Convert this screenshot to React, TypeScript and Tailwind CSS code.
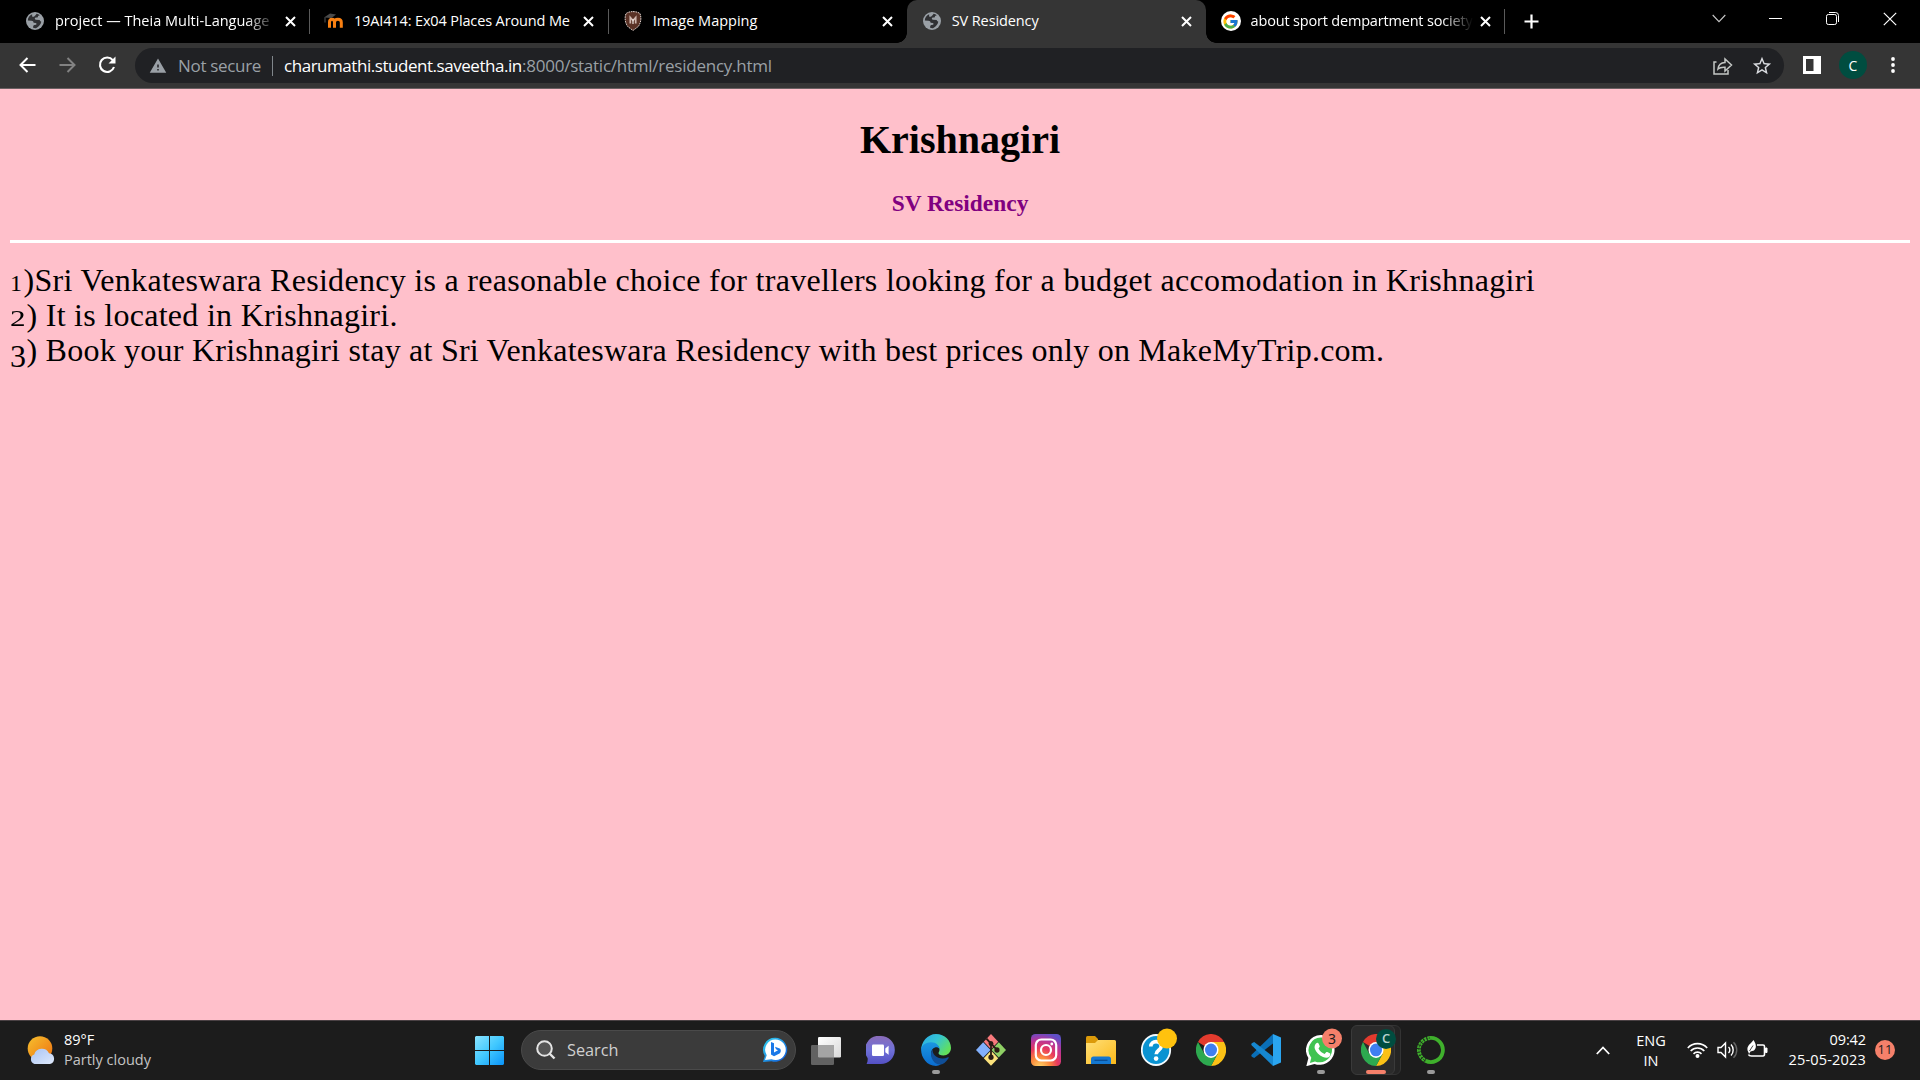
import React from "react";
import { FcGoogle } from "react-icons/fc";
import { MdStarBorder, MdWarning } from "react-icons/md";

const Globe = () => (
  <svg width="18" height="18" viewBox="0 0 18 18">
    <circle cx="9" cy="9" r="9" fill="#9aa0a6" />
    <path d="M6.2 2.2C3.6 3.2 1.8 5.800 1.800 8.600l3.600.2c1.500 0 2.100.8 2.200 2l2.200.3c.8.2.9 1 .3 1.700l-1.700.3c-.9.3-1.300 1-1.300 2.700 1.100.4 2.300.5 3.300.2 2.600-1.500 4.300-3.600 4.900-6.300-.9-.3-1.500-.9-1.700-1.700l-3.800-.2c-1.200-.2-1.400-1.800-.1-2.200l1.600-.2c.6-.2.7-.7.7-1.500l1.800-.7c-1-.8-2-1.300-3.200-1.500L9.500 3.200 8.200 4.600c-1 .6-2 .1-2.100-.7z" fill="#303134" />
  </svg>
);

const Moodle = () => (
  <svg width="20" height="16" viewBox="0 0 20 16">
    <path d="M5.500 14.800V9.300c0-4.200 5-4.200 5 0v5.500M10.500 9.300c0-4.200 6.800-4.200 6.800 0v5.500" fill="none" stroke="#f98012" strokeWidth="3" />
    <path d="M0 4.500 6 .6l6 .8L7.500 5z" fill="#4a4a4a" />
    <path d="M1 4.500v5" stroke="#555" strokeWidth="1" />
  </svg>
);

const Crest = () => (
  <svg width="18" height="20" viewBox="0 0 18 20">
    <path d="M9 .6c3 0 5.500.8 7 2 1.700 4.500.8 9.500-1.800 13L9 19.500l-5.200-3.900C1.200 12.100.3 7.100 2 2.600c1.500-1.200 4-2 7-2z" fill="#5a3226" stroke="#e0d4d0" strokeWidth="1" strokeDasharray="1.600 .8" />
    <path d="M6.300 12.500V6.500l2.700 3 2.700-3v6" fill="none" stroke="#d0b8b0" strokeWidth="1.700" />
    <path d="M9 8v5" stroke="#f0e6e2" strokeWidth="1.200" />
  </svg>
);

const GoogleIcon = () => (
  <span className="flex h-5 w-5 items-center justify-center rounded-full bg-white"><FcGoogle size={17} /></span>
);

const Cross = () => (
  <svg width="11" height="11" viewBox="0 0 11 11" className="shrink-0">
    <path d="M1 1l9 9M10 1l-9 9" stroke="#fff" strokeWidth="2" />
  </svg>
);

const tabs = [
  { icon: <Globe />, title: "project — Theia Multi-Language", cls: "tracking-normal", fade: true },
  { icon: <Moodle />, title: "19AI414: Ex04 Places Around Me", cls: "tracking-[-0.130px]", fade: false },
  { icon: <Crest />, title: "Image Mapping", cls: "tracking-normal", fade: false },
  { icon: <Globe />, title: "SV Residency", cls: "tracking-[-0.100px]", fade: false, active: true },
  { icon: <GoogleIcon />, title: "about sport dempartment society", cls: "tracking-[-0.180px]", fade: true },
];

function TabStrip() {
  return (
    <div className="flex h-[43px] bg-black pl-[10px]">
      {tabs.map((t) => (
        <div key={t.title} className={t.active ? "relative flex h-[43px] w-[298.900px] shrink-0 items-center rounded-t-[10px] bg-[#353535] pl-[15px]" : "relative flex h-[43px] w-[298.900px] shrink-0 items-center pl-[15px]"}>
          {t.active && (
            <>
              <span className="absolute bottom-0 -left-[10px] h-[10px] w-[10px] bg-[radial-gradient(circle_at_0_0,#000_9.500px,#353535_10px)]" />
              <span className="absolute -right-[10px] bottom-0 h-[10px] w-[10px] bg-[radial-gradient(circle_at_100%_0,#000_9.500px,#353535_10px)]" />
            </>
          )}
          <span className="mb-px flex w-5 justify-center">{t.icon}</span>
          <span className={t.fade ? "mb-[3px] ml-[10px] w-[222px] whitespace-nowrap [mask-image:linear-gradient(to_right,#000_86%,transparent_100%)]" : "mb-[3px] ml-[10px] w-[222px] whitespace-nowrap"}>
            <span className={"inline-block text-[14.500px] leading-5 text-white " + t.cls}>{t.title}</span>
          </span>
          <span className="absolute left-[274.500px]"><Cross /></span>
          {!t.active && t.title !== "Image Mapping" && <span className="absolute -right-px h-[25px] w-px bg-[#5a5a5a]" />}
          {t.title === "19AI414: Ex04 Places Around Me" && <span className="absolute -right-px h-[25px] w-px bg-[#5a5a5a]" />}
        </div>
      ))}
      <div className="flex flex-1 items-center pl-[20px]">
        <svg width="15" height="15" viewBox="0 0 15 15"><path d="M7.500.5v14M.5 7.500h14" stroke="#fff" strokeWidth="2.200" /></svg>
        <svg width="14" height="9" viewBox="0 0 14 9" className="mb-[6px] ml-[173px]"><path d="M.7 1l6.300 6.600L13.300 1" fill="none" stroke="#c8c8c8" strokeWidth="1.100" /></svg>
        <span className="mb-[6px] ml-[43px] h-px w-[13px] bg-white" />
        <svg width="13" height="13" viewBox="0 0 13 13" className="mb-[6px] ml-[44px]" fill="none" stroke="#fff">
          <rect x=".5" y="2.500" width="10" height="10" rx="1.800" /><path d="M3 .5h6.500a3 3 0 0 1 3 3v6.500" />
        </svg>
        <svg width="14" height="14" viewBox="0 0 14 14" className="mb-[6px] ml-[44px]"><path d="M.8.8l12.400 12.400M13.200.8.8 13.200" stroke="#fff" strokeWidth="1.200" /></svg>
      </div>
    </div>
  );
}

function Toolbar() {
  return (
    <div className="flex h-[46px] items-center border-b border-[#6a6062] bg-[#353535] pl-[19px]">
      <svg width="17" height="16" viewBox="0 0 17 16" fill="none" stroke="#fff" strokeWidth="2" className="mb-px"><path d="M16.500 8H1.800M8.500 1 1.500 8l7 7" /></svg>
      <svg width="17" height="16" viewBox="0 0 17 16" fill="none" stroke="#828282" strokeWidth="2" className="mb-px ml-[23px]"><path d="M.5 8h14.700M8.500 1l7 7-7 7" /></svg>
      <svg width="18" height="18" viewBox="0 0 18 18" fill="none" stroke="#fff" strokeWidth="2.100" className="mb-px ml-[22px]"><path d="M14.800 4.200A7.200 7.200 0 1 0 16 11" /><path d="M17.500.5v7h-7z" fill="#fff" stroke="none" /></svg>
      <div className="ml-[19px] flex h-[35px] w-[1649px] items-center rounded-full bg-[#202124] pl-[14px] text-[17px]">
        <MdWarning size={18} color="#9aa0a6" />
        <div className="ml-[11px] w-[83px] tracking-[-0.320px] whitespace-nowrap text-[#9aa0a6]">Not secure</div>
        <span className="ml-[11px] h-5 w-px bg-[#80868b]" />
        <div className="ml-[11px] w-[238px] tracking-[-0.460px] whitespace-nowrap text-white">charumathi.student.saveetha.in</div>
        <div className="tracking-[-0.240px] whitespace-nowrap text-[#9aa0a6]">:8000/static/html/residency.html</div>
        <svg width="20" height="18" viewBox="0 0 20 18" className="mr-[18px] ml-auto" fill="none" stroke="#c4c7c5" strokeWidth="1.500"><path d="M3.500 5H1v12h14v-4" /><path d="M5 12c.5-4 3-6.200 7-6.400V2l6.500 6-6.500 6v-3.800C8.800 10 6.500 10.500 5 12z" /></svg>
        <MdStarBorder size={22} color="#dadce0" className="mr-[11px]" />
      </div>
      <svg width="18" height="18" viewBox="0 0 18 18" className="mb-px ml-[19px]"><path fillRule="evenodd" d="M0 0h18v18H0zM3 3v12h7.500V3z" fill="#fff" /></svg>
      <span className="mb-px ml-[18px] flex h-7 w-7 items-center justify-center rounded-full bg-[#004d40] text-[14px] text-white">C</span>
      <svg width="4" height="16" viewBox="0 0 4 16" className="mb-px ml-[24px]" fill="#fff"><circle cx="2" cy="2" r="1.900" /><circle cx="2" cy="8" r="1.900" /><circle cx="2" cy="14" r="1.900" /></svg>
    </div>
  );
}

const Chrome = () => (
  <svg width="30" height="32" viewBox="0 0 48 51" preserveAspectRatio="none">
    <g transform="scale(1 1.060)">
      <path d="M24 24 3.200 12A24 24 0 0 1 44.800 12z" fill="#e33b2e" />
      <path d="M24 24V12h20.800A24 24 0 0 1 24 48l10.400-18z" fill="#fbc116" />
      <path d="M3.200 12A24 24 0 0 0 24 48l10.400-18L24 24l-10.400 6z" fill="#2da94f" />
      <circle cx="24" cy="24" r="12" fill="#fff" /><circle cx="24" cy="24" r="9.600" fill="#3f7ff0" />
    </g>
  </svg>
);

const Start = () => (
  <svg width="29" height="29" viewBox="0 0 29 29">
    <defs><linearGradient id="win" x1="0" y1="0" x2="1" y2="1" ><stop offset="0" stopColor="#8ae4ff" /><stop offset=".5" stopColor="#41c8ff" /><stop offset="1" stopColor="#0a93f8" /></linearGradient></defs>
    <path d="M1 0h13v14H0V1zM15 0h13l1 1v13H15zM0 15h14v14H1l-1-1zM15 15h14v13l-1 1H15z" fill="url(#win)" />
  </svg>
);

const Bing = () => (
  <svg width="26" height="26" viewBox="0 0 26 26">
    <defs><linearGradient id="bng" x1="0" y1="0" x2="1" y2="1"><stop offset="0" stopColor="#32d4f0" /><stop offset="1" stopColor="#0f54d8" /></linearGradient></defs>
    <path d="M13.500.8a12 12 0 1 1-4 23.400L1 25l1.800-6A12 12 0 0 1 13.500.8z" fill="url(#bng)" />
    <path d="M13.500 2.500a10.300 10.300 0 1 1-4 19.800L3 23l1.700-4.800A10.300 10.300 0 0 1 13.500 2.500z" fill="#fff" />
    <path d="M9 5l3 1.200v9.300l4-2.300-2-1-1-2.500 4.700 1.800c1.500.7 1.600 3.800-.2 5L12 19.300 9 17.500z" fill="#1a78e8" />
  </svg>
);

const TaskView = () => (
  <svg width="30" height="28" viewBox="0 0 30 28">
    <defs><linearGradient id="tv" x1="0" y1="0" x2="1" y2="1"><stop offset="0" stopColor="#fff" /><stop offset="1" stopColor="#d8d8d8" /></linearGradient></defs>
    <rect x="7" y="0" width="23" height="20.500" rx="1.200" fill="url(#tv)" />
    <rect x="0" y="8" width="23" height="20" rx="1.200" fill="#626262" />
    <path d="M7 8h16v12.500H8.200A1.200 1.200 0 0 1 7 19.300z" fill="#a4a4a4" />
  </svg>
);

const Chat = () => (
  <svg width="29" height="29" viewBox="0 0 29 29">
    <defs><linearGradient id="cht" x1="0" y1="0" x2="0" y2="1"><stop offset="0" stopColor="#8a6bb8" /><stop offset=".5" stopColor="#6f71d8" /><stop offset="1" stopColor="#5450c4" /></linearGradient></defs>
    <path d="M14.800 0a14 14 0 1 1 0 28H.6c1-2 1.300-4 1-6A14 14 0 0 1 14.800 0z" fill="url(#cht)" />
    <rect x="6" y="8.500" width="12" height="11.500" rx="1.200" fill="#fff" /><path d="M19.300 12.500 22.600 9.800v9l-3.300-2.500z" fill="#fff" />
  </svg>
);

const Edge = () => (
  <svg width="30" height="32" viewBox="0 0 30 32">
    <defs>
      <linearGradient id="ed1" x1="0" y1="0" x2="1" y2=".6"><stop offset="0" stopColor="#2aa8e8" /><stop offset=".5" stopColor="#34c4d4" /><stop offset="1" stopColor="#62e05a" /></linearGradient>
      <linearGradient id="ed2" x1="0" y1="0" x2="0" y2="1"><stop offset="0" stopColor="#1b96e0" /><stop offset="1" stopColor="#0a6cd0" /></linearGradient>
    </defs>
    <path d="M15 0c9 0 15 6.500 15 14 0 4.500-3.600 7.500-7.500 7.500-3.500 0-5-1.300-5-2.500 0-.8 1-1.300 1-3.300 0-3.500-3.200-6.300-8-6.300C5 9.400 1 13 .2 16 0 8 6.500 0 15 0z" fill="url(#ed1)" />
    <path d="M.1 16C0 11.500 5 8.300 10 8.300c5.500 0 8.400 3.500 8.600 6.800-1-1.500-2.600-2.100-4.600-1.700-3 .9-4.500 4-3.500 8 1.200 4.500 5 8.600 9.500 8.700-2 1.400-3.500 1.900-5 1.900C6 32 .2 23.500.1 16z" fill="url(#ed2)" />
    <path d="M11.500 15.500c-3 4-1.200 11 3.500 14 4.500 2.500 9 .5 12.700-5.500.3-.6-.2-1-.8-.7-4 2-10 1.500-13-1.700-1.600-1.800-2.400-4-2.400-6.100z" fill="#104f98" />
  </svg>
);

const Git = () => (
  <svg width="30" height="32" viewBox="0 0 30 32">
    <g transform="scale(1 1.060)">
      <path d="M15 0l7.200 7.200-7.200 7.300-7.200-7.300z" fill="#f8797c" />
      <path d="M7.200 7.800l7.300 7.200-7.300 7.200L0 15z" fill="#82b0fc" />
      <path d="M22.800 7.800 30 15l-7.200 7.200-7.300-7.200z" fill="#8fd065" />
      <path d="M15 15.500l7.200 7.300L15 30l-7.200-7.200z" fill="#fbe27c" />
      <path d="M10.500 4.500l4.500 4.500v13M15 9l6 6" stroke="#2b1b14" strokeWidth="1.800" fill="none" />
      <circle cx="15" cy="9" r="2.400" fill="#2b1b14" /><circle cx="15" cy="22" r="2.600" fill="#2b1b14" /><circle cx="21" cy="15" r="2.600" fill="#2b1b14" />
    </g>
  </svg>
);

const Insta = () => (
  <svg width="30" height="32" viewBox="0 0 30 32">
    <defs>
      <radialGradient id="ig" cx=".3" cy="1.050" r="1.100"><stop offset="0" stopColor="#ffd86a" /><stop offset=".3" stopColor="#fb8a3c" /><stop offset=".55" stopColor="#e8395e" /><stop offset=".8" stopColor="#b5359c" /><stop offset="1" stopColor="#6050c8" /></radialGradient>
    </defs>
    <rect y="0" width="30" height="32" rx="4.500" fill="url(#ig)" />
    <g fill="none" stroke="#fff" strokeWidth="2.200"><rect x="4.800" y="5.500" width="20.400" height="21" rx="5.500" /><circle cx="15" cy="16" r="5" /></g>
    <circle cx="20.800" cy="10" r="1.400" fill="#fff" />
  </svg>
);

const Folder = () => (
  <svg width="30" height="29" viewBox="0 0 30 29">
    <defs><linearGradient id="fld" x1="0" y1="0" x2="1" y2="1"><stop offset="0" stopColor="#ffdf78" /><stop offset="1" stopColor="#fbb91a" /></linearGradient></defs>
    <path d="M0 1.500Q0 0 1.500 0H9l3 3v4H0z" fill="#dc9a0a" />
    <path d="M0 7h9l3-3h16.500Q30 4 30 5.500V28H0z" fill="url(#fld)" />
    <path d="M5 28v-5q0-2.500 2.500-2.500h15Q25 20.500 25 23v5z" fill="#1477d0" /><path d="M8.500 24.300h13" stroke="#0a4d94" strokeWidth="1.300" />
  </svg>
);

const Help = () => (
  <svg width="36" height="38" viewBox="0 0 36 38">
    <ellipse cx="15" cy="22" rx="14.200" ry="15" fill="#0a93d2" stroke="#f4fafd" strokeWidth="1.800" />
    <path d="M9.800 18.500c0-6.500 10.400-6.500 10.400-.3 0 4.200-5 4-5 8" fill="none" stroke="#fff" strokeWidth="3.700" /><circle cx="15.100" cy="30.600" r="2.300" fill="#fff" />
    <circle cx="26" cy="10.500" r="10" fill="#ffc20e" />
  </svg>
);

const VSCode = () => (
  <svg width="30" height="32" viewBox="0 0 30 32">
    <path d="M22 0v9.500L3.200 24 .8 22.700q-1-1.100 0-2.200z" fill="#0a6fb8" />
    <path d="M22 32v-9.500L3.200 8 .8 9.300q-1 1.100 0 2.200z" fill="#1687d0" />
    <path d="M22 0l8 3.500v25L22 32z" fill="#2aa5f0" />
  </svg>
);

const WhatsApp = () => (
  <svg width="36" height="38" viewBox="0 0 36 38">
    <path d="M15.500 7A15 15 0 1 1 8.500 36L.3 38.200 2.400 30A15 15 0 0 1 15.500 7z" fill="#fff" />
    <path d="M15.500 9.500a12.500 12.500 0 1 1-6.500 24L3.900 34.900l1.400-5.100A12.500 12.500 0 0 1 15.500 9.500z" fill="#3fc351" />
    <path d="M10 15.500c1-1 2.200-1 2.700.2l1 2.400c.2.700-.2 1.200-1.200 2.300 1.500 2.800 3.500 4.500 6.200 5.500 1.500-2 1.800-2.200 2.600-1.900l2.500 1.300c1 .5.500 2.500-.5 3.400-1.500 1.300-3.800 1.200-6.300.2-4-1.700-7-5.200-8.100-8-.8-2.500 0-4.400 1.100-5.400z" fill="#fff" />
    <circle cx="26" cy="10.500" r="10" fill="#f5806a" />
    <text x="26" y="15.500" fontSize="14" textAnchor="middle" fill="#1c1c1c" fontFamily="Noto Sans">3</text>
  </svg>
);

const Anaconda = () => (
  <svg width="28" height="30" viewBox="0 0 28 30">
    <path d="M13 3a12 12 0 1 1-4.500 22.700" fill="none" stroke="#3fb02c" strokeWidth="3.800" />
    <path d="M13 3a12 12 0 0 0-4.500 22.700" fill="none" stroke="#3fb02c" strokeWidth="3.800" strokeDasharray="2.600 .8" />
    <path d="M13 3a12 12 0 0 0-4.500 22.700" fill="none" stroke="#1c1c1c" strokeWidth=".8" strokeDasharray="1.300 1.500" />
  </svg>
);

const apps = [
  { icon: <Edge />, run: true }, { icon: <Git /> }, { icon: <Insta /> }, { icon: <Folder /> },
  { icon: <Help />, raised: true }, { icon: <Chrome /> }, { icon: <VSCode /> }, { icon: <WhatsApp />, raised: true, run: true },
];

function Taskbar() {
  return (
    <div className="flex h-[60px] items-center border-t border-[#4a4144] bg-[#1c1c1c] text-[14.500px] text-white">
      <div className="flex w-[475px] items-center pl-[27px]">
        <svg width="29" height="29" viewBox="0 0 29 29">
          <defs>
            <linearGradient id="sun" x1="0" y1="0" x2="1" y2="1"><stop offset="0" stopColor="#f6c02e" /><stop offset="1" stopColor="#ee7010" /></linearGradient>
            <linearGradient id="cld" x1="0" y1="0" x2="1" y2="1"><stop offset="0" stopColor="#a9c4f5" /><stop offset="1" stopColor="#dfe9fb" /></linearGradient>
          </defs>
          <circle cx="13" cy="12.500" r="12.300" fill="url(#sun)" />
          <path d="M7.500 28a5 5 0 0 1-.3-9.500 8 8 0 0 1 14.800-1.300A5.500 5.500 0 0 1 23 28z" fill="url(#cld)" />
        </svg>
        <div className="mb-[2px] ml-2 flex flex-col leading-5">
          <span>89°F</span>
          <span className="text-[#c4c4c4]">Partly cloudy</span>
        </div>
      </div>
      <Start />
      <div className="mb-px ml-[17px] flex h-10 w-[275px] items-center rounded-full border border-[#4a4a4a] bg-[#3b3b3b] pr-[7px] pl-[14px]">
        <svg width="20" height="20" viewBox="0 0 20 20" fill="none" stroke="#e4e4e4"><circle cx="8.500" cy="8.500" r="7.300" strokeWidth="2" fill="#555" /><path d="M13.500 13.500l5 5" strokeWidth="2.400" /></svg>
        <span className="mt-px ml-[11px] text-[16.300px] text-[#d0d0d0]">Search</span>
        <span className="ml-auto"><Bing /></span>
      </div>
      <span className="ml-[15px]"><TaskView /></span>
      <span className="ml-[25px]"><Chat /></span>
      <div className="mb-px ml-[13px] flex items-center">
        {apps.map((a, i) => (
          <div key={i} className="relative flex h-[50px] w-[55px] items-center justify-center">
            <span className={a.raised ? "mb-[6px] ml-[6px]" : ""}>{a.icon}</span>
            {a.run && <span className="absolute bottom-px h-1 w-2 rounded-full bg-[#9a9a9a]" />}
          </div>
        ))}
        <div className="relative flex h-[50px] w-[55px] items-center justify-center">
          <span className="absolute top-0 left-[8px] h-[50px] w-[45px] rounded-md border border-[#333] bg-[#242424]" />
          <span className="absolute top-0 left-[3px] h-[50px] w-[44px] rounded-md border border-[#3a3a3a] bg-[#2b2b2b]" />
          <span className="relative"><Chrome /></span>
          <span className="absolute top-[4px] left-[28px] flex h-5 w-5 items-center justify-center rounded-full bg-[#004d40] text-[13px] font-semibold text-[#b9d2ce]">C</span>
          <span className="absolute bottom-px h-1 w-5 rounded-full bg-[#f5806a]" />
        </div>
        <div className="relative flex h-[50px] w-[55px] items-center justify-center">
          <Anaconda /><span className="absolute bottom-px h-1 w-2 rounded-full bg-[#9a9a9a]" />
        </div>
      </div>
      <div className="mr-[25px] ml-auto flex items-center">
        <svg width="14" height="9" viewBox="0 0 14 9" fill="none" stroke="#fff" strokeWidth="1.800"><path d="M.8 8 7 1.500 13.200 8" /></svg>
        <div className="ml-[26px] flex w-[30px] flex-col items-center leading-5"><span>ENG</span><span>IN</span></div>
        <svg width="21" height="16" viewBox="0 0 21 16" fill="none" stroke="#fff" strokeWidth="1.600" className="mb-[2px] ml-[21px]"><path d="M.8 6a13 13 0 0 1 19.400 0M3.700 9a9.200 9.200 0 0 1 13.600 0M6.500 11.900a5.500 5.500 0 0 1 8 0" /><circle cx="10.500" cy="14" r="1.200" fill="#fff" /></svg>
        <svg width="21" height="18" viewBox="0 0 21 18" fill="none" stroke="#fff" strokeWidth="1.400" className="mb-px ml-[9px]"><path d="M1 6.500h3l4.500-4.500v14L4 11.500H1zM11.500 6a4 4 0 0 1 0 6M14 3.500a8 8 0 0 1 0 11" /><path d="M16.500 1.200a11 11 0 0 1 0 15.600" stroke="#666" /></svg>
        <svg width="21" height="18" viewBox="0 0 21 18" fill="none" stroke="#fff" strokeWidth="1.600" className="mb-[3px] ml-[9px]"><path d="M10 5h6q1.500 0 1.500 1.500V14q0 2-1.500 2H4.500Q2 16 1.500 14.500" /><path d="M18.500 8v4.500h1.500V8z" fill="#fff" strokeWidth="1" /><path d="M6.500 0c2.800 4 3.300 8 .5 10.500L3.500 11.500 2 14l-.5-1.500C-1 9 1 5 4 3z" fill="#fff" stroke="none" /><path d="M2.500 11 6 5.500" stroke="#1c1c1c" strokeWidth=".8" /></svg>
        <div className="mb-[2px] ml-[20px] flex w-[78px] flex-col items-end leading-5 whitespace-nowrap"><span className="tracking-[-0.100px]">09:42</span><span className="tracking-[0.180px]">25-05-2023</span></div>
        <span className="mb-px ml-[9px] flex h-5 w-5 items-center justify-center rounded-full bg-[#f5806a] text-[13px] text-[#1c1c1c]">11</span>
      </div>
    </div>
  );
}

export default function App() {
  return (
    <div className="flex h-[1080px] w-[1920px] flex-col overflow-hidden font-['Open_Sans','Noto_Sans',sans-serif]">
      <TabStrip />
      <Toolbar />
      <main className="flex-1 bg-[#ffc0cb] px-[10px] font-['Liberation_Serif',serif] text-black">
        <h1 className="mt-[28px] text-center text-[40px] leading-[46px] font-bold">Krishnagiri</h1>
        <h3 className="mt-[27px] text-center text-[23.400px] leading-[27px] font-bold text-[#800080]">SV Residency</h3>
        <hr className="mt-[23px] h-[3px] border-0 bg-white" />
        <div className="mt-[20px] text-[32px] leading-[35px] whitespace-nowrap">
          <p className="h-[35px] tracking-[0.300px]"><span className="inline-block w-[13.500px] text-[24px] leading-none">1</span>)Sri Venkateswara Residency is a reasonable choice for travellers looking for a budget accomodation in Krishnagiri</p>
          <p className="h-[35px] tracking-[0.280px]"><span className="inline-block w-[16.500px] origin-left scale-x-130 text-[24px] leading-none">2</span>) It is located in Krishnagiri.</p>
          <p className="h-[35px] tracking-[0.230px]"><span className="relative top-[6px] inline-block w-[16.500px] text-[32px] leading-none">3</span>) Book your Krishnagiri stay at Sri Venkateswara Residency with best prices only on MakeMyTrip.com.</p>
        </div>
      </main>
      <Taskbar />
    </div>
  );
}
